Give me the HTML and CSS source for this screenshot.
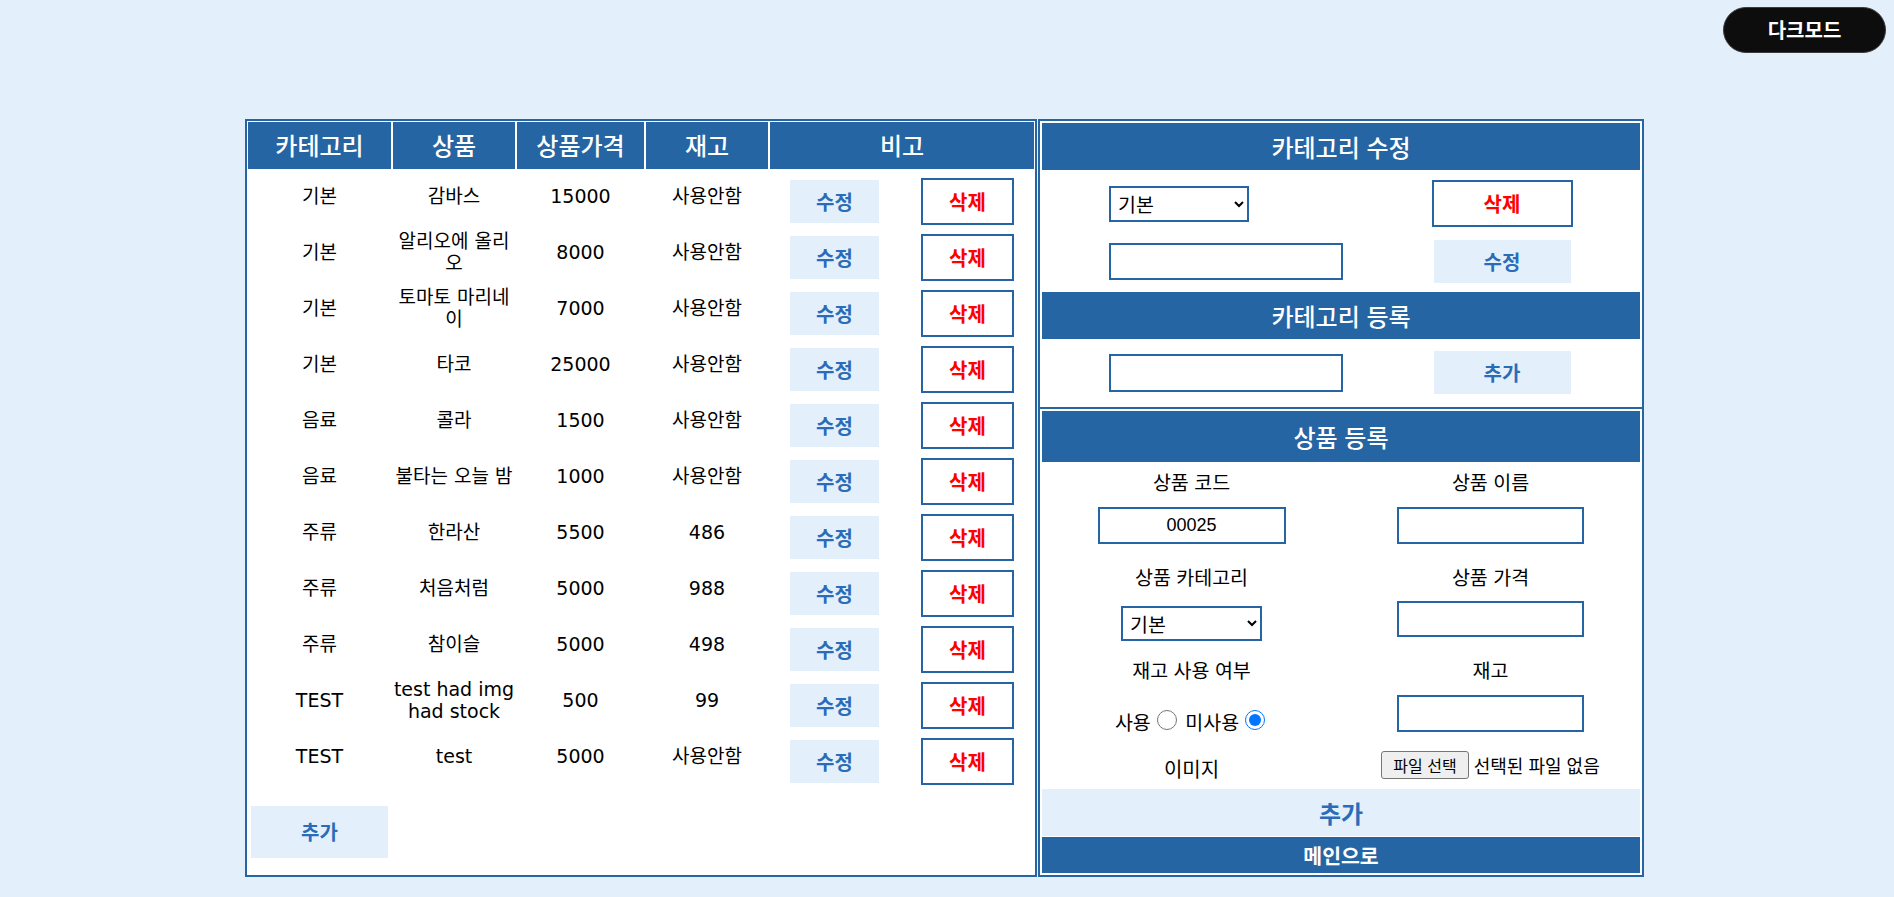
FILE: index.html
```html
<!DOCTYPE html>
<html lang="ko">
<head>
<meta charset="utf-8">
<title>상품 관리</title>
<link rel="stylesheet" href="styles.css">
</head>
<body>
<header class="topbar">
  <button class="dark-toggle" type="button">다크모드</button>
</header>
<main class="layout">
  <section class="list-panel">
    <table class="product-table">
      <colgroup>
        <col class="c1"><col class="c2"><col class="c3"><col class="c4"><col class="c5"><col class="c6">
      </colgroup>
      <thead>
        <tr><th>카테고리</th><th>상품</th><th>상품가격</th><th>재고</th><th colspan="2">비고</th></tr>
      </thead>
      <tbody>
        <tr><td>기본</td><td>감바스</td><td>15000</td><td>사용안함</td><td class="act"><button class="btn-edit">수정</button></td><td class="act"><button class="btn-del">삭제</button></td></tr>
        <tr><td>기본</td><td>알리오에 올리오</td><td>8000</td><td>사용안함</td><td class="act"><button class="btn-edit">수정</button></td><td class="act"><button class="btn-del">삭제</button></td></tr>
        <tr><td>기본</td><td>토마토 마리네이</td><td>7000</td><td>사용안함</td><td class="act"><button class="btn-edit">수정</button></td><td class="act"><button class="btn-del">삭제</button></td></tr>
        <tr><td>기본</td><td>타코</td><td>25000</td><td>사용안함</td><td class="act"><button class="btn-edit">수정</button></td><td class="act"><button class="btn-del">삭제</button></td></tr>
        <tr><td>음료</td><td>콜라</td><td>1500</td><td>사용안함</td><td class="act"><button class="btn-edit">수정</button></td><td class="act"><button class="btn-del">삭제</button></td></tr>
        <tr><td>음료</td><td>불타는 오늘 밤</td><td>1000</td><td>사용안함</td><td class="act"><button class="btn-edit">수정</button></td><td class="act"><button class="btn-del">삭제</button></td></tr>
        <tr><td>주류</td><td>한라산</td><td>5500</td><td>486</td><td class="act"><button class="btn-edit">수정</button></td><td class="act"><button class="btn-del">삭제</button></td></tr>
        <tr><td>주류</td><td>처음처럼</td><td>5000</td><td>988</td><td class="act"><button class="btn-edit">수정</button></td><td class="act"><button class="btn-del">삭제</button></td></tr>
        <tr><td>주류</td><td>참이슬</td><td>5000</td><td>498</td><td class="act"><button class="btn-edit">수정</button></td><td class="act"><button class="btn-del">삭제</button></td></tr>
        <tr><td>TEST</td><td>test had img had stock</td><td>500</td><td>99</td><td class="act"><button class="btn-edit">수정</button></td><td class="act"><button class="btn-del">삭제</button></td></tr>
        <tr><td>TEST</td><td>test</td><td>5000</td><td>사용안함</td><td class="act"><button class="btn-edit">수정</button></td><td class="act"><button class="btn-del">삭제</button></td></tr>
      </tbody>
    </table>
    <div class="list-footer">
      <button class="btn-add">추가</button>
    </div>
  </section>

  <section class="edit-panel">
    <div class="cat-section">
      <h2 class="section-title">카테고리 수정</h2>
      <div class="cat-row r1">
        <select class="select cat-select"><option>기본</option><option>음료</option><option>주류</option><option>TEST</option></select>
        <button class="btn-del wide">삭제</button>
      </div>
      <div class="cat-row r2">
        <input class="field cat-input" type="text">
        <button class="btn-soft">수정</button>
      </div>
      <h2 class="section-title t2">카테고리 등록</h2>
      <div class="cat-row r3">
        <input class="field cat-input tall" type="text">
        <button class="btn-soft">추가</button>
      </div>
    </div>

    <div class="product-section">
      <h2 class="section-title lg">상품 등록</h2>
      <div class="form-row labels l1"><span>상품 코드</span><span>상품 이름</span></div>
      <div class="form-row i1">
        <input class="field prod-input code" type="text" value="00025">
        <input class="field prod-input" type="text">
      </div>
      <div class="form-row labels l2"><span>상품 카테고리</span><span>상품 가격</span></div>
      <div class="form-row i2">
        <select class="select prod-select"><option>기본</option><option>음료</option><option>주류</option><option>TEST</option></select>
        <input class="field prod-input short" type="text">
      </div>
      <div class="form-row labels l3"><span>재고 사용 여부</span><span>재고</span></div>
      <div class="form-row i3">
        <div class="radio-group">
          <label>사용<input type="radio" name="stock"></label>
          <label>미사용<input type="radio" name="stock" checked></label>
        </div>
        <input class="field prod-input" type="text">
      </div>
      <div class="form-row i4">
        <span class="img-label">이미지</span>
        <span class="file-pick"><span class="file-btn">파일 선택</span><span class="file-name">선택된 파일 없음</span></span>
      </div>
      <button class="submit-bar">추가</button>
      <button class="home-bar">메인으로</button>
    </div>
  </section>
</main>
</body>
</html>
```

FILE: styles.css
```css
* { box-sizing: border-box; }

body {
  margin: 0;
  background: #e3f0fc;
  color: #000;
  font-family: "Noto Sans CJK KR", sans-serif;
}

button { cursor: pointer; }

/* top bar */
.topbar {
  display: flex;
  justify-content: flex-end;
  padding: 7px 8px 0 0;
}
.dark-toggle {
  width: 163px;
  height: 46px;
  border-radius: 23px;
  background: #0d0d0d;
  border: 1px solid #3c3c3c;
  color: #fff;
  font: 700 20px/1 "Noto Sans CJK KR", sans-serif;
}

/* layout */
.layout {
  display: flex;
  align-items: stretch;
  gap: 1px;
  margin: 66px 0 0 245px;
}

/* left list panel */
.list-panel {
  width: 792px;
  border: 2px solid #2565a3;
  background: #fff;
  display: flex;
  flex-direction: column;
}
.product-table {
  width: 790px;
  margin: -1px;
  border-collapse: separate;
  border-spacing: 2px;
  table-layout: fixed;
  font-family: "DejaVu Sans", "Noto Sans CJK KR", sans-serif;
  font-size: 19px;
  line-height: 22px;
}
.c1 { width: 143px; }
.c2 { width: 122px; }
.c3 { width: 127px; }
.c4 { width: 122px; }
.c5 { width: 129px; }
.c6 { width: 133px; }

.product-table thead tr { height: 47px; }
.product-table th {
  padding: 0;
  background: #2565a3;
  color: #fff;
  font: 500 24px/1.2 "Noto Sans CJK KR", sans-serif;
  text-align: center;
  vertical-align: middle;
}
.product-table tbody tr { height: 54px; }
.product-table td {
  padding: 0 0 4px;
  text-align: center;
  vertical-align: middle;
}
.product-table td.act {
  padding: 0;
  vertical-align: top;
}

.btn-edit,
.btn-del,
.btn-soft,
.btn-add {
  font: 700 20px/1 "Noto Sans CJK KR", sans-serif;
  border-radius: 0;
  padding: 0;
}
.btn-edit {
  display: block;
  width: 89px;
  height: 43px;
  margin: 9px auto 0;
  border: 0;
  background: #e3f0fc;
  color: #2b6cb8;
}
.btn-del {
  display: block;
  width: 93px;
  height: 47px;
  margin: 7px auto 0;
  border: 2px solid #2565a3;
  background: #fff;
  color: #ff0000;
}
.btn-del.wide {
  width: 141px;
  margin: 0;
}
.btn-soft {
  width: 137px;
  height: 43px;
  border: 0;
  background: #e3f0fc;
  color: #2b6cb8;
}

.list-footer {
  padding: 20px 0 15px 4px;
}
.btn-add {
  width: 137px;
  height: 52px;
  border: 0;
  background: #e3f0fc;
  color: #2b6cb8;
}

/* right edit panel */
.edit-panel {
  width: 606px;
  border: 2px solid #2565a3;
  background: #fff;
}
.section-title {
  margin: 0;
  height: 47px;
  background: #2565a3;
  color: #fff;
  font: 500 24px/47px "Noto Sans CJK KR", sans-serif;
  text-align: center;
}
.section-title.t2 { margin-top: 9px; }
.section-title.lg { height: 51px; line-height: 51px; }

.cat-section {
  padding: 2px 2px 13px;
  border-bottom: 2px solid #2565a3;
}
.cat-row {
  display: grid;
  grid-template-columns: 322px 1fr;
  align-items: center;
  justify-items: center;
}
.cat-row > :first-child {
  justify-self: start;
  margin-left: 67px;
}
.cat-row.r1 { margin-top: 10px; height: 47px; }
.cat-row.r2 { margin-top: 13px; height: 43px; }
.cat-row.r3 { margin-top: 12px; height: 43px; }

.field {
  border: 2px solid #2565a3;
  border-radius: 0;
  background: #fff;
  padding: 0 4px;
  font: 18px "Liberation Sans", "Noto Sans CJK KR", sans-serif;
  color: #000;
  text-align: center;
  outline: none;
}
.cat-input { width: 234px; height: 37px; }
.cat-input.tall { height: 38px; }

.select {
  border: 2px solid #2565a3;
  border-radius: 0;
  background: #fff;
  color: #000;
  padding: 0 0 0 3px;
  font: 19.5px "Noto Sans CJK KR", sans-serif;
}
.cat-select { width: 140px; height: 36px; }
.prod-select { width: 141px; height: 35px; margin-top: 5px; }

.product-section {
  padding: 2px;
}
.form-row {
  display: grid;
  grid-template-columns: 1fr 1fr;
  justify-items: center;
  align-items: start;
}
.labels {
  font-size: 19.5px;
  line-height: 22px;
}
.l1 { margin-top: 9px; }
.i1 { margin-top: 14px; }
.l2 { margin-top: 22px; }
.i2 { margin-top: 13px; height: 40px; }
.l3 { margin-top: 18px; }
.i3 { margin-top: 14px; }
.i4 { margin-top: 18px; }

.prod-input { width: 187px; height: 37px; }
.prod-input.code { width: 188px; }
.prod-input.short { height: 36px; }

.radio-group {
  margin-top: 15px;
  font-size: 19.5px;
  line-height: 22px;
}
.radio-group input {
  width: 20px;
  height: 20px;
  margin: 0 3px 0 6px;
}

.img-label {
  margin-top: 7px;
  font-size: 20px;
  line-height: 22px;
}
.file-pick {
  display: flex;
  align-items: center;
  height: 28px;
  white-space: nowrap;
}
.file-btn {
  display: inline-block;
  height: 28px;
  padding: 0 11px;
  border: 1px solid #767676;
  border-radius: 3px;
  background: #efefef;
  font-size: 16px;
  line-height: 26px;
}
.file-name {
  margin-left: 5px;
  font-size: 18px;
}

.submit-bar {
  display: block;
  width: 100%;
  height: 47px;
  margin-top: 9px;
  border: 0;
  background: #e3f0fc;
  color: #2b6cb8;
  font: 700 24px/1 "Noto Sans CJK KR", sans-serif;
}
.home-bar {
  display: block;
  width: 100%;
  height: 36px;
  margin-top: 1px;
  border: 0;
  background: #2565a3;
  color: #fff;
  font: 700 20.5px/1 "Noto Sans CJK KR", sans-serif;
}
```
